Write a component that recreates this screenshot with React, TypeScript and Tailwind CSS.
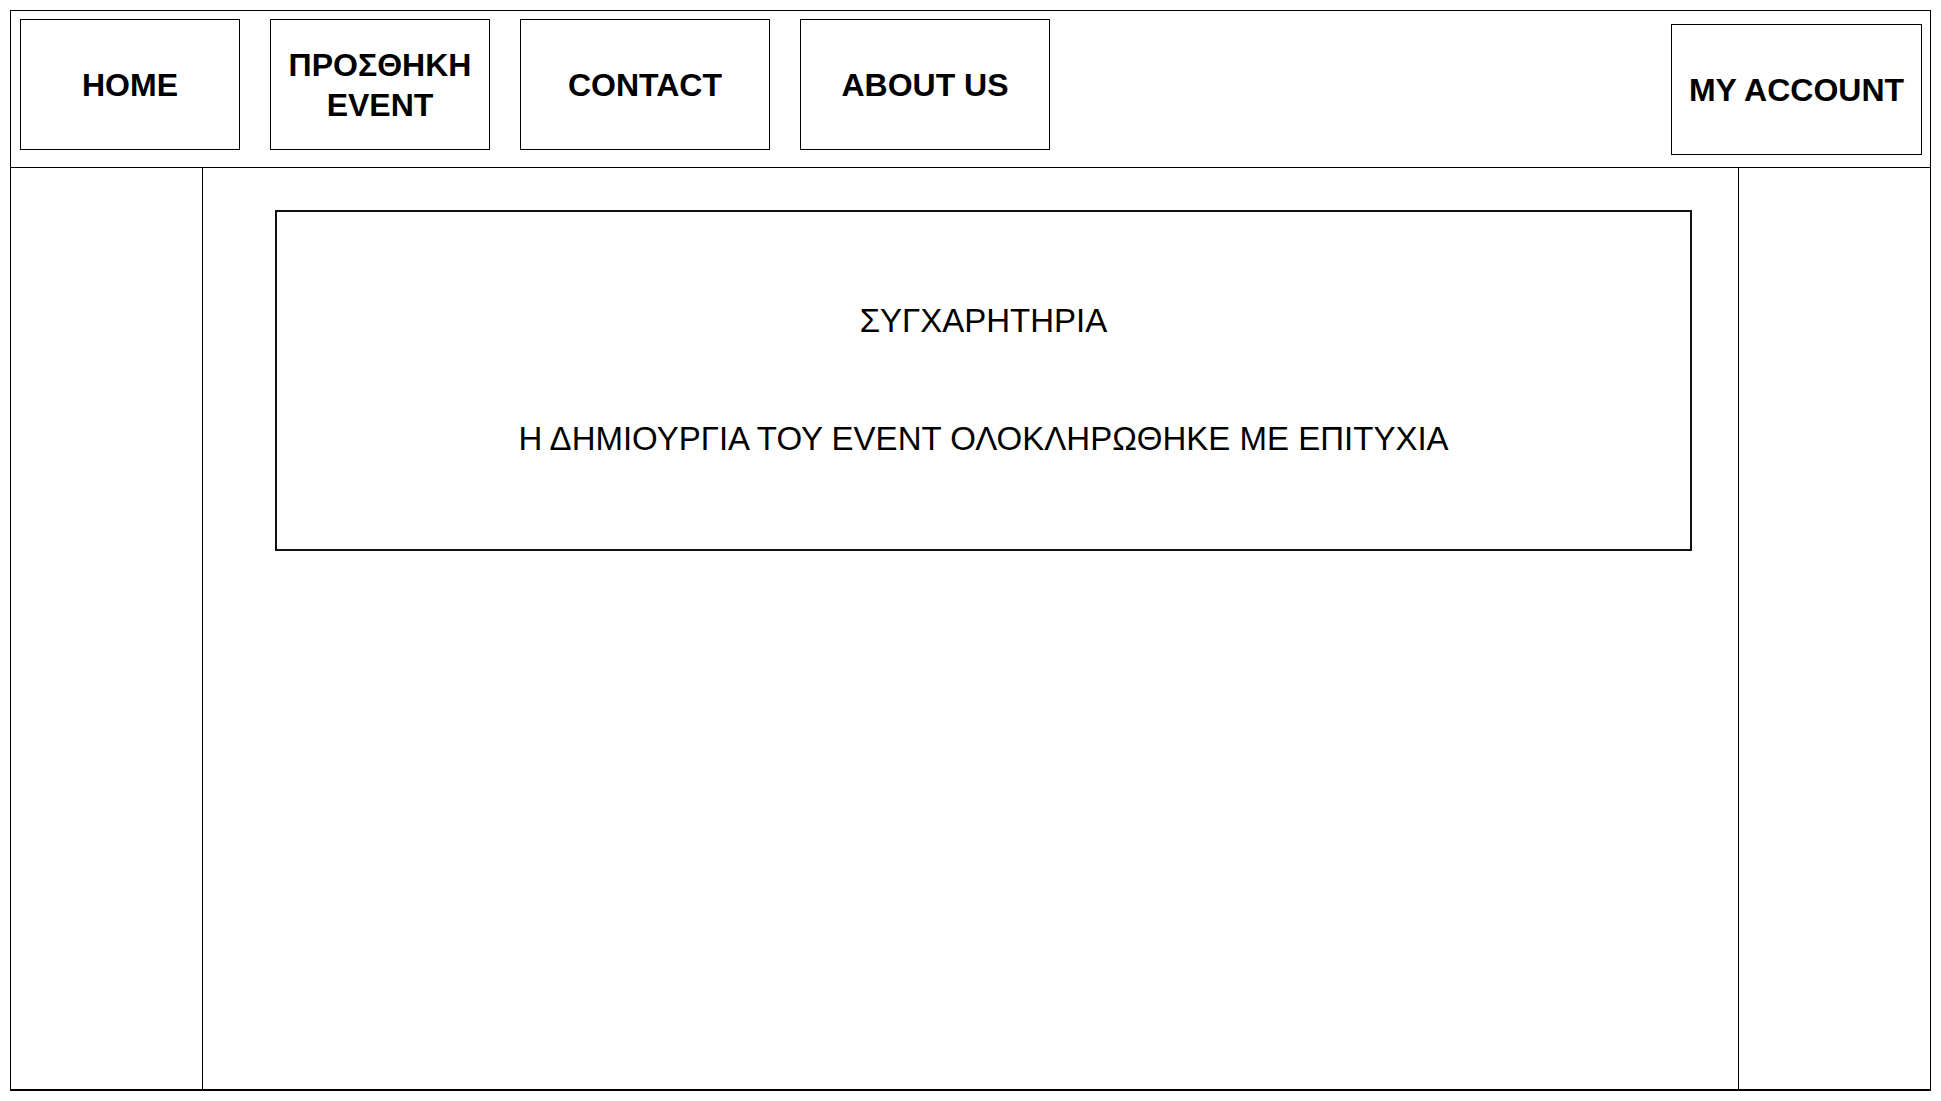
import React from 'react';

const NavButton: React.FC<{ label: React.ReactNode; className?: string }> = ({ label, className = '' }) => (
  <div
    className={`flex items-center justify-center border border-black text-center text-[32px] font-bold leading-[40px] text-black ${className}`}
  >
    {label}
  </div>
);

const App: React.FC = () => {
  return (
    <div className="min-h-[1101px] w-full bg-white pl-[10px] pt-[10px] font-['Liberation_Sans',Arial,sans-serif]">
      <div className="flex h-[1081px] w-[1921px] flex-col border border-b-2 border-black">
        {/* top navigation */}
        <div className="flex h-[157px] shrink-0 items-start border-b border-black pl-[9px] pr-[8px] pt-[8px]">
          <div className="flex gap-[30px]">
            <NavButton label="HOME" className="h-[131px] w-[220px]" />
            <NavButton
              label={
                <span>
                  ΠΡΟΣΘΗΚΗ
                  <br />
                  EVENT
                </span>
              }
              className="h-[131px] w-[220px]"
            />
            <NavButton label="CONTACT" className="h-[131px] w-[250px]" />
            <NavButton label="ABOUT US" className="h-[131px] w-[250px]" />
          </div>
          <NavButton label="MY ACCOUNT" className="ml-auto mt-[5px] h-[131px] w-[251px]" />
        </div>

        {/* body */}
        <div className="flex flex-1">
          <div className="w-[192px] shrink-0 border-r border-black" />
          <div className="flex-1 pl-[72px] pr-[46px] pt-[42px]">
            <div className="flex h-[341px] flex-col items-center border-2 border-[#111] pt-[89px] text-[33px] leading-[40px] text-black">
              <p>ΣΥΓΧΑΡΗΤΗΡΙΑ</p>
              <p className="mt-[78px]">Η ΔΗΜΙΟΥΡΓΙΑ ΤΟΥ EVENT ΟΛΟΚΛΗΡΩΘΗΚΕ ΜΕ ΕΠΙΤΥΧΙΑ</p>
            </div>
          </div>
          <div className="w-[192px] shrink-0 border-l border-black" />
        </div>
      </div>
    </div>
  );
};

export default App;
